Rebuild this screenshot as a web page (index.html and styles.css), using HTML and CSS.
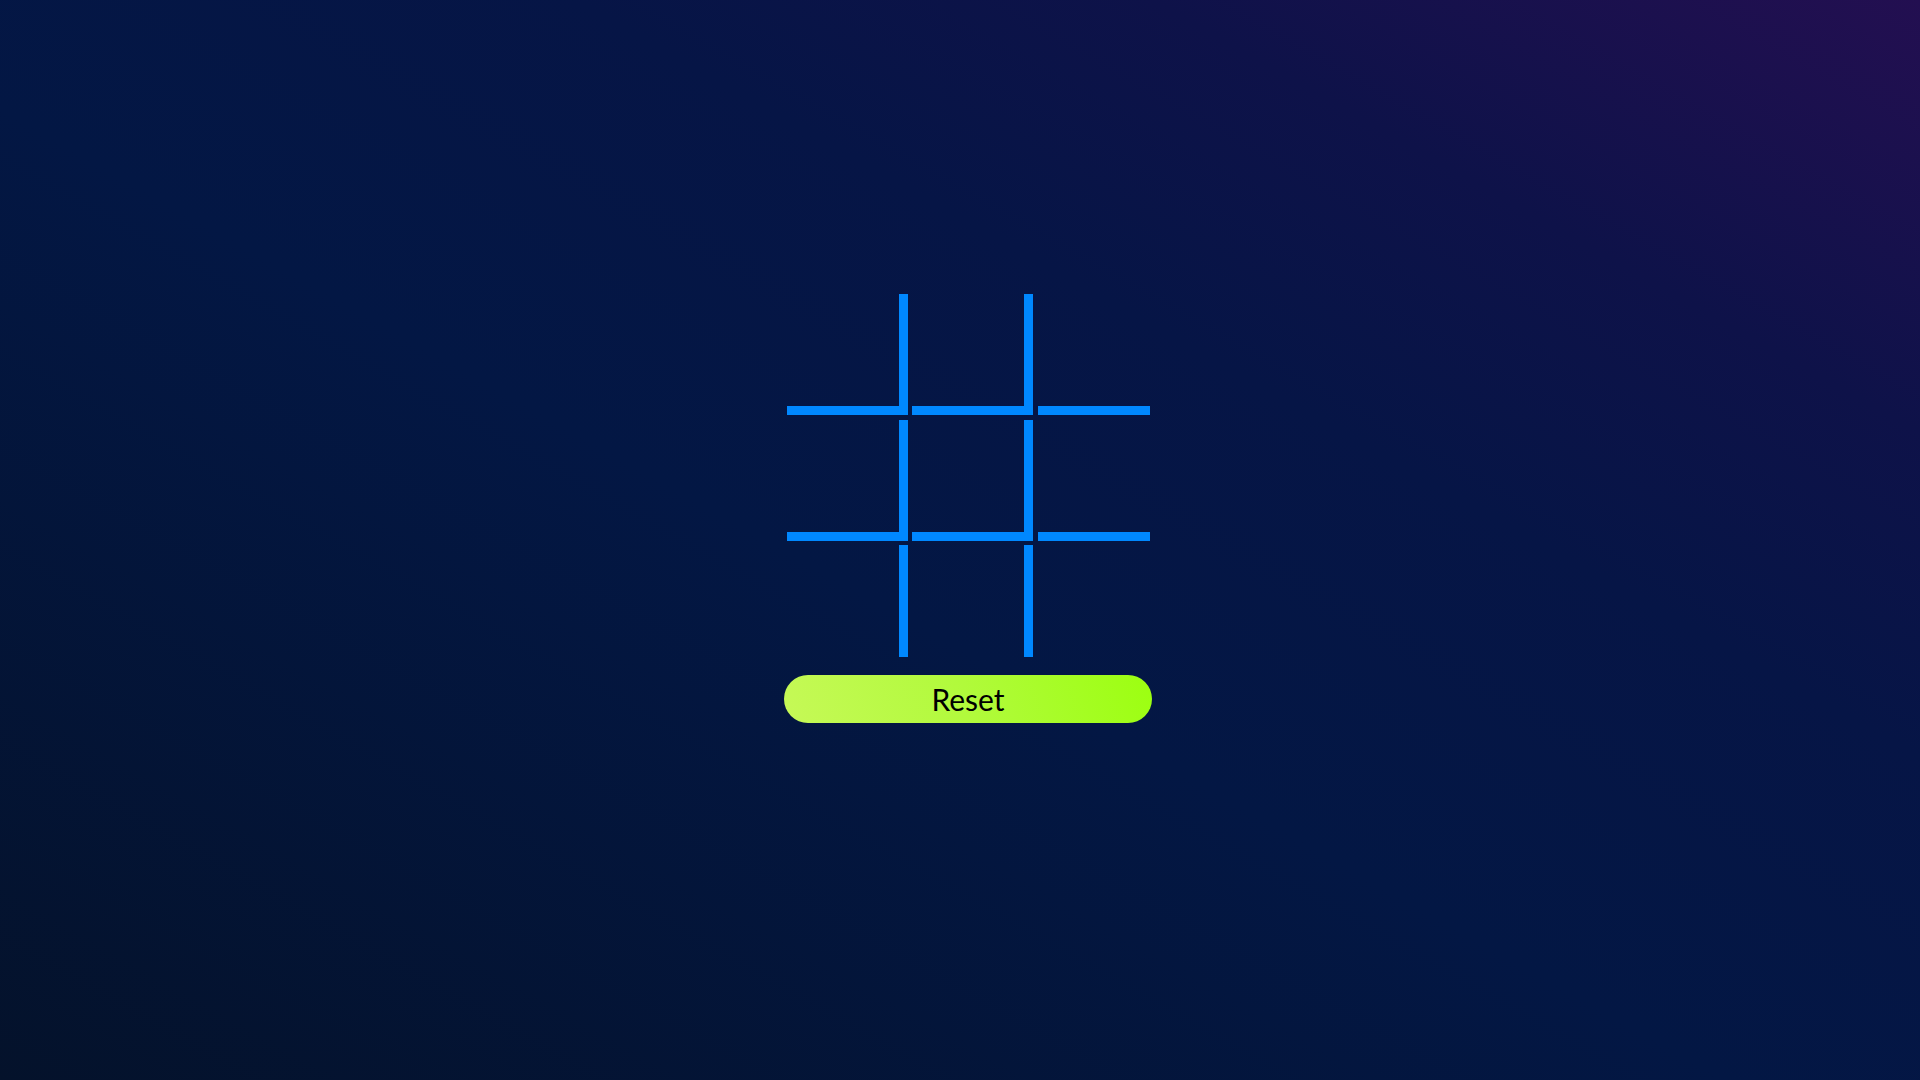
FILE: index.html
```html
<!DOCTYPE html>
<html lang="en">
<head>
<meta charset="utf-8">
<title>Tic Tac Toe</title>
<link rel="stylesheet" href="styles.css">
</head>
<body>
<main class="page">
  <div class="board">
    <div class="cell br bb"></div>
    <div class="cell br bb"></div>
    <div class="cell bb"></div>
    <div class="cell br bb"></div>
    <div class="cell br bb"></div>
    <div class="cell bb"></div>
    <div class="cell br"></div>
    <div class="cell br"></div>
    <div class="cell"></div>
  </div>
  <button class="reset">Reset</button>
</main>
</body>
</html>
```

FILE: styles.css
```css
html, body {
  margin: 0;
  padding: 0;
}
body {
  min-height: 100vh;
  background: linear-gradient(to top right, #04122b 0%, #031744 45%, #061546 65%, #0e1249 80%, #230f51 100%);
  font-family: Lato, "Noto Sans", sans-serif;
}
.page {
  box-sizing: border-box;
  height: 100vh;
  display: flex;
  flex-direction: column;
  align-items: center;
  padding: 294px 0 0 16px;
}
.board {
  display: grid;
  grid-template-columns: 121px 121px 112px;
  grid-template-rows: 121px 121px 112px;
  gap: 4.5px;
}
.cell {
  box-sizing: border-box;
}
.br {
  border-right: 9px solid #0088ff;
}
.bb {
  border-bottom: 9px solid #0088ff;
}
.reset {
  margin-top: 18px;
  width: 368px;
  height: 48px;
  border: none;
  border-radius: 24px;
  background: linear-gradient(70deg, #c6f957 0%, #b1fa3b 50%, #9cff10 100%);
  color: #000;
  font-family: Lato, "Noto Sans", sans-serif;
  font-size: 30px;
  font-weight: 400;
  padding: 0;
  cursor: pointer;
}
```
